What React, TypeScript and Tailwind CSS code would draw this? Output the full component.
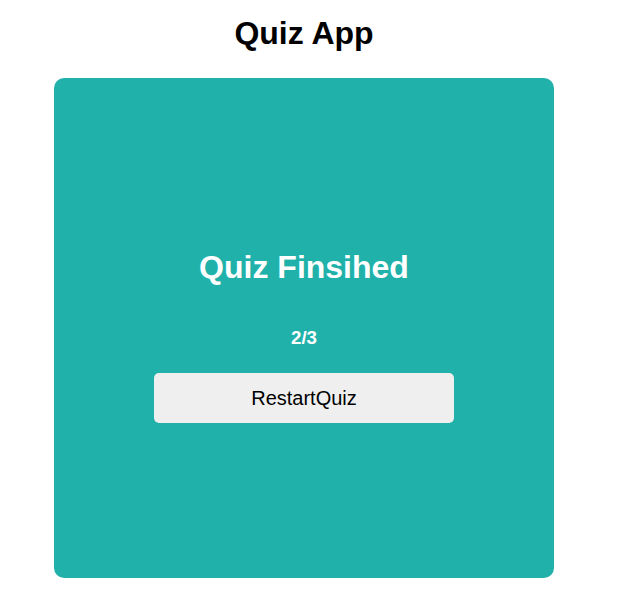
import React from 'react';

const App: React.FC = function App() {
  return (
    <div className="flex flex-col items-center w-[608px] font-['Liberation_Sans',Arial,sans-serif]">
      <h1 className="mt-[15px] text-[32px] leading-[37px] font-bold text-black">Quiz App</h1>
      <div className="mt-[26px] w-[500px] h-[500px] rounded-[10px] bg-[#20b2aa] flex flex-col items-center pt-[171px]">
        <h2 className="text-[32px] leading-[37px] font-bold text-white">Quiz Finsihed</h2>
        <h3 className="mt-[41px] text-[18.72px] leading-[22px] font-bold text-white">2/3</h3>
        <button className="mt-[24px] w-[300px] h-[50px] rounded-[5px] bg-[#efefef] text-[20px] text-black">
          RestartQuiz
        </button>
      </div>
    </div>
  );
};

export default App;
